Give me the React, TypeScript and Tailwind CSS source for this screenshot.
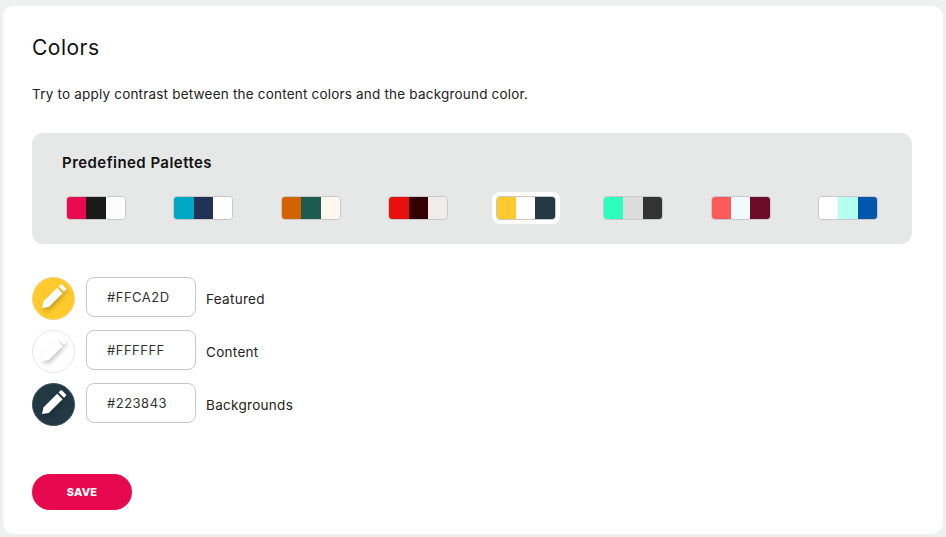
const palettes = [
  { colors: ['#e80a50', '#1a1a1a', '#fcfcfc'] },
  { colors: ['#00a8c6', '#203354', '#ffffff'] },
  { colors: ['#d16400', '#1d5a50', '#fff8ee'] },
  { colors: ['#e80f0f', '#330000', '#f1ecec'] },
  { colors: ['#ffca2d', '#ffffff', '#223843'], selected: true },
  { colors: ['#2affbf', '#dcdcdc', '#333333'] },
  { colors: ['#ff5a5a', '#f2fafd', '#6b0c2b'] },
  { colors: ['#ffffff', '#b3fff0', '#0057ad'] },
]

const fields = [
  { color: '#FFCA2D', label: 'Featured', circle: 'bg-[#ffca2d] border-[#f1d27a]' },
  { color: '#FFFFFF', label: 'Content', circle: 'bg-white border-[#e6e6e6]' },
  { color: '#223843', label: 'Backgrounds', circle: 'bg-[#223843] border-[#3c4f59]' },
]

function PencilIcon() {
  return (
    <svg width="28" height="28" viewBox="0 0 28 28" className="mb-[3px] ml-[1px] drop-shadow-[1px_3px_2px_rgba(0,0,0,0.22)]">
      <path d="M2 25 3.4 18.6 17.2 4.8l5.4 5.4L8.8 24z" fill="#ffffff" />
      <path d="M18.6 3.4 20.4 1.6a1.2 1.2 0 0 1 1.7 0l3.7 3.7a1.2 1.2 0 0 1 0 1.7L24 8.8z" fill="#ffffff" />
    </svg>
  )
}

export default function App() {
  return (
    <div className="h-[537px] w-[946px] bg-[#eff1f0] pt-[6px] pl-[3px] text-black [font-family:Inter,sans-serif]">
      <div className="h-[528px] w-[940px] rounded-[11px] bg-white pt-[30px] pl-[29px]">
        <h1 className="text-[21px] leading-6 font-normal tracking-[0.5px] text-[#111]">Colors</h1>
        <p className="mt-[25px] text-[13.5px] leading-[18px] tracking-[0.2px] text-[#222]">
          Try to apply contrast between the content colors and the background color.
        </p>

        <div className="mt-[30px] h-[111px] w-[880px] rounded-[11px] bg-[#e6e8e7] px-[34px] pt-[20px]">
          <h2 className="-ml-[4px] text-[15px] leading-5 font-semibold tracking-[0.45px] text-[#111]">
            Predefined Palettes
          </h2>
          <div className="mt-[23px] flex justify-between">
            {palettes.map((palette, index) => (
              <div
                key={index}
                className={`flex h-[24px] w-[60px] overflow-hidden rounded-[4px] border border-[#c8c8c8] ${
                  palette.selected ? 'outline-4 outline-white' : ''
                }`}
              >
                {palette.colors.map(color => (
                  <div key={color} className="flex-1" style={{ backgroundColor: color }} />
                ))}
              </div>
            ))}
          </div>
        </div>

        <div className="mt-[33px] flex flex-col gap-[10px]">
          {fields.map(field => (
            <div key={field.label} className="flex h-[43px] items-start">
              <div className={`flex h-[43px] w-[43px] items-center justify-center rounded-full border ${field.circle}`}>
                <PencilIcon />
              </div>
              <div className="ml-[11px] flex h-[40px] w-[110px] items-center rounded-[8px] border border-[#c8c8c8] pt-[1px] pl-[20px] text-[13px] tracking-[0.5px] text-[#333]">
                {field.color}
              </div>
              <span className="mt-[13px] ml-[10px] text-[13.5px] leading-[18px] tracking-[0.3px] text-[#222]">
                {field.label}
              </span>
            </div>
          ))}
        </div>

        <button className="mt-[48px] block h-[36px] w-[100px] rounded-full bg-[#e6094f] text-[11px] font-extrabold tracking-[0.2px] text-white">
          SAVE
        </button>
      </div>
    </div>
  )
}
